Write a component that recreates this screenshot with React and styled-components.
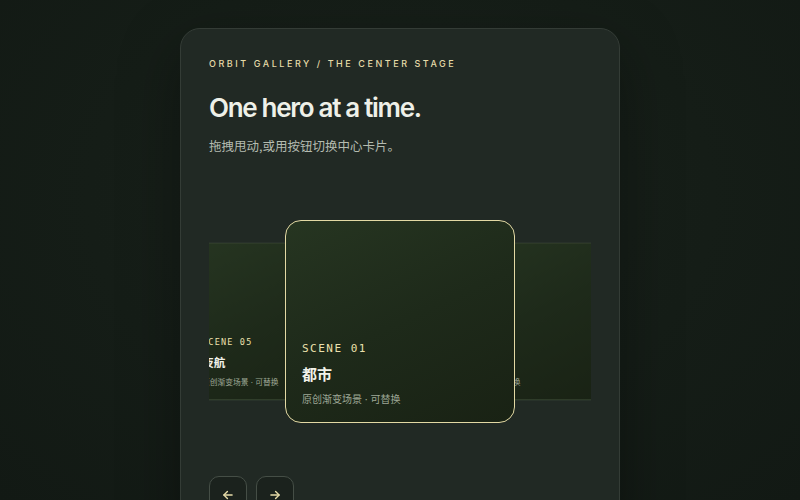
import React, { useState } from 'react';
import styled, { createGlobalStyle } from 'styled-components';

const GlobalStyle = createGlobalStyle`
    html, body {
        margin: 0;
        height: 100%;
        background: #151d17;
    }
    body {
        font-family: Inter, "Noto Sans CJK SC", sans-serif;
        overflow: hidden;
    }
`;

const Page = styled.div`
    width: 800px;
    height: 500px;
    display: flex;
    justify-content: center;
    padding-top: 28px;
    box-sizing: border-box;
    background: radial-gradient(ellipse at 50% 40%, #19211b 0%, #151d17 55%, #121914 100%);
`;

const Panel = styled.section`
    width: 440px;
    height: 520px;
    box-sizing: border-box;
    padding: 29px 28px 0;
    background: #212924;
    border: 1px solid #343c36;
    border-radius: 20px;
    box-shadow: 0 20px 60px rgba(0, 0, 0, 0.35);
    display: flex;
    flex-direction: column;
`;

const Eyebrow = styled.div`
    font-size: 9px;
    font-weight: 500;
    letter-spacing: 2.55px;
    color: #e6dba8;
    line-height: 12px;
`;

const Heading = styled.h1`
    margin: 20px 0 0;
    font-size: 26px;
    font-weight: 600;
    letter-spacing: -1.3px;
    color: #eef0e8;
    line-height: 36px;
`;

const Sub = styled.p`
    margin: 11px 0 0;
    font-size: 12.5px;
    color: #b4bbb0;
    line-height: 18px;
    font-family: "Noto Sans CJK SC", sans-serif;
`;

const Stage = styled.div`
    position: relative;
    margin-top: 58px;
    height: 212px;
    overflow: hidden;
`;

const Card = styled.div`
    position: absolute;
    top: 7px;
    left: 50%;
    width: 230px;
    height: 203px;
    margin-left: -115px;
    box-sizing: border-box;
    padding: 0 16px 16px;
    display: flex;
    flex-direction: column;
    justify-content: flex-end;
    border-radius: ${p => (p.$active ? '16px' : '12px')};
    border: 1px solid ${p => (p.$active ? '#e3d9a4' : 'rgba(120, 140, 110, 0.35)')};
    background: linear-gradient(155deg, #263521 0%, #1e2a1a 50%, #192214 100%);
    transform: translateX(${p => p.$x}px) scale(${p => p.$scale});
    z-index: ${p => p.$z};
`;

const SceneLabel = styled.div`
    font-family: "DejaVu Sans Mono", monospace;
    font-size: 11px;
    letter-spacing: 1.5px;
    color: #ebe0ac;
    line-height: 14px;
`;

const SceneTitle = styled.div`
    margin-top: 8px;
    font-family: "Noto Sans CJK SC", sans-serif;
    font-size: 15px;
    font-weight: 700;
    color: #f1f2ea;
    line-height: 20px;
`;

const SceneDesc = styled.div`
    margin-top: 8px;
    font-family: Inter, "Noto Sans CJK SC", sans-serif;
    font-size: 10px;
    color: #9ea796;
    line-height: 14px;
`;

const Controls = styled.div`
    margin-top: 51px;
    display: flex;
    gap: 9px;
`;

const NavButton = styled.button`
    width: 38px;
    height: 38px;
    border-radius: 10px;
    border: 1px solid #454e46;
    background: #1b221d;
    color: #e6dba8;
    display: flex;
    align-items: center;
    justify-content: center;
    padding: 0;
    cursor: pointer;
`;

const Arrow = ({ dir }) => (
    <svg width="14" height="14" viewBox="0 0 24 24" fill="none" stroke="currentColor" strokeWidth="2.4" strokeLinecap="round" strokeLinejoin="round">
        {dir === 'left'
            ? (<><path d="M19 12H5" /><path d="M11 6l-6 6 6 6" /></>)
            : (<><path d="M5 12h14" /><path d="M13 6l6 6-6 6" /></>)}
    </svg>
);

const scenes = [
    { id: '01', title: '都市' },
    { id: '02', title: '晨雾' },
    { id: '03', title: '海岸' },
    { id: '04', title: '山径' },
    { id: '05', title: '夜航' },
];

const App = () => {
    const [index, setIndex] = useState(0);
    const n = scenes.length;
    const prev = (index - 1 + n) % n;
    const next = (index + 1) % n;

    const cards = [
        { scene: scenes[prev], x: -122, scale: 0.775, z: 1 },
        { scene: scenes[next], x: 120, scale: 0.775, z: 1 },
        { scene: scenes[index], x: 0, scale: 1, z: 2, active: true },
    ];

    return (
        <>
            <GlobalStyle />
            <Page>
                <Panel>
                    <Eyebrow>ORBIT GALLERY / THE CENTER STAGE</Eyebrow>
                    <Heading>One hero at a time.</Heading>
                    <Sub>拖拽甩动,或用按钮切换中心卡片。</Sub>
                    <Stage>
                        {cards.map(({ scene, x, scale, z, active }) => (
                            <Card key={scene.id} $x={x} $scale={scale} $z={z} $active={active}>
                                <SceneLabel>SCENE {scene.id}</SceneLabel>
                                <SceneTitle>{scene.title}</SceneTitle>
                                <SceneDesc>原创渐变场景 · 可替换</SceneDesc>
                            </Card>
                        ))}
                    </Stage>
                    <Controls>
                        <NavButton onClick={() => setIndex(prev)} aria-label="previous">
                            <Arrow dir="left" />
                        </NavButton>
                        <NavButton onClick={() => setIndex(next)} aria-label="next">
                            <Arrow dir="right" />
                        </NavButton>
                    </Controls>
                </Panel>
            </Page>
        </>
    );
};

export default App;
